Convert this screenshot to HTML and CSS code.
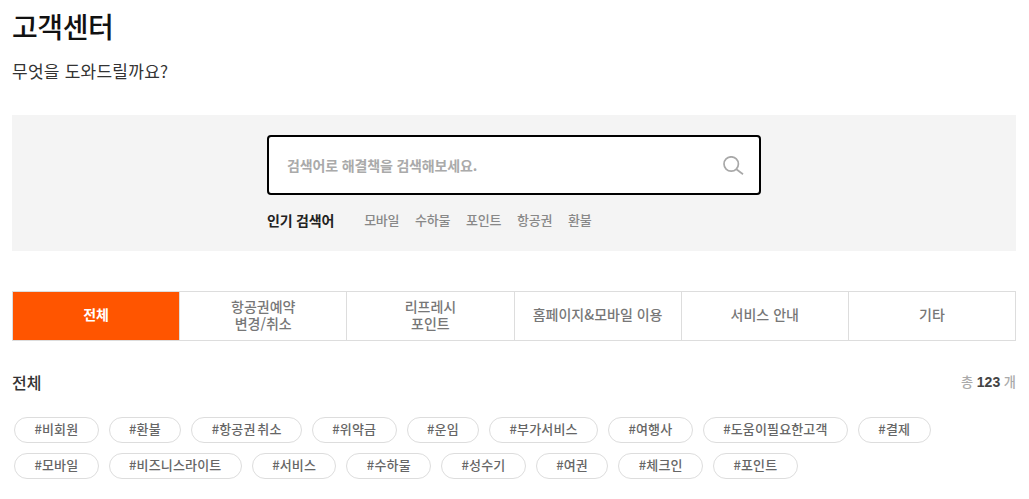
FILE: index.html
```html
<!DOCTYPE html>
<html lang="ko">
<head>
<meta charset="utf-8">
<title>고객센터</title>
<link rel="stylesheet" href="styles.css">
</head>
<body>
<main class="page">
  <h1 class="title">고객센터</h1>
  <p class="subtitle">무엇을 도와드릴까요?</p>
  <section class="search-panel">
    <div class="search-inner">
      <div class="search-box">
        <span class="placeholder">검색어로 해결책을 검색해보세요.</span>
        <svg class="search-icon" width="21" height="19" viewBox="0 0 21 19" fill="none" stroke="#a8a8a8" stroke-width="1.7"><circle cx="8.2" cy="8" r="7.2"/><path d="M13.4 13.2L20 18.2"/></svg>
      </div>
      <div class="popular">
        <strong class="popular-label">인기 검색어</strong>
        <span>모바일</span><span>수하물</span><span>포인트</span><span>항공권</span><span>환불</span>
      </div>
    </div>
  </section>
  <nav class="tabs">
    <a class="tab active">전체</a>
    <a class="tab">항공권예약<br>변경/취소</a>
    <a class="tab">리프레시<br>포인트</a>
    <a class="tab">홈페이지&amp;모바일 이용</a>
    <a class="tab">서비스 안내</a>
    <a class="tab">기타</a>
  </nav>
  <div class="result-head">
    <h2 class="result-title">전체</h2>
    <span class="count">총 <b>123</b> 개</span>
  </div>
  <div class="tags">
    <span class="tag">#비회원</span><span class="tag">#환불</span><span class="tag">#항공권 취소</span><span class="tag">#위약금</span><span class="tag">#운임</span><span class="tag">#부가서비스</span><span class="tag">#여행사</span><span class="tag">#도움이필요한고객</span><span class="tag">#결제</span>
    <span class="tag">#모바일</span><span class="tag">#비즈니스라이트</span><span class="tag">#서비스</span><span class="tag">#수하물</span><span class="tag">#성수기</span><span class="tag">#여권</span><span class="tag">#체크인</span><span class="tag">#포인트</span>
  </div>
</main>
</body>
</html>
```
FILE: styles.css
```css
* { box-sizing: border-box; }
html, body { margin: 0; padding: 0; background: #fff; }
body {
  font-family: "Noto Sans CJK KR", "Noto Sans", sans-serif;
  color: #222;
  overflow: hidden;
}
.page { padding: 0 13px 0 12px; }
.title {
  margin: 0;
  height: 46px;
  font-size: 28px;
  line-height: 28px;
  padding-top: 12px;
  font-weight: 500;
  color: #111;
  letter-spacing: -0.4px;
}
.subtitle {
  margin: 12px 0 0;
  font-size: 17px;
  line-height: 26px;
  color: #333;
  letter-spacing: 0.25px;
}
.search-panel {
  margin-top: 31px;
  height: 136px;
  background: #f4f4f4;
  padding-top: 20px;
  display: flex;
  justify-content: center;
}
.search-inner { width: 494px; }
.search-box {
  height: 60px;
  background: #fff;
  border: 2px solid #000;
  border-radius: 4px;
  display: flex;
  align-items: center;
  justify-content: space-between;
  padding: 0 15px 0 18px;
}
.placeholder { font-size: 14px; font-weight: 700; color: #aaa; letter-spacing: -0.15px; }
.search-icon { display: block; }
.popular {
  display: flex;
  align-items: center;
  gap: 16px;
  margin-top: 15px;
  font-size: 13px;
  line-height: 20px;
  color: #888;
  letter-spacing: -0.3px;
  font-weight: 500;
}
.popular-label { font-size: 14px; font-weight: 700; color: #222; margin-right: 14px; letter-spacing: -0.2px; }
.tabs {
  display: flex;
  margin-top: 40px;
  height: 50px;
  border: 1px solid #ddd;
  border-right: 0;
}
.tab {
  flex: 1 1 0;
  display: flex;
  align-items: center;
  justify-content: center;
  text-align: center;
  border-right: 1px solid #ddd;
  padding-bottom: 3px;
  font-size: 14px;
  line-height: 17px;
  font-weight: 500;
  color: #777;
}
.tab.active { background: #f50; color: #fff; font-weight: 700; }
.result-head {
  display: flex;
  justify-content: space-between;
  align-items: center;
  margin-top: 29px;
  height: 24px;
}
.result-title { margin: 0; font-size: 16px; font-weight: 500; color: #333; }
.count { font-size: 13.2px; color: #aaa; font-weight: 500; position: relative; top: -1px; }
.count b { color: #444; font-weight: 700; font-family: "Liberation Sans", sans-serif; font-size: 14px; }
.tags {
  display: flex;
  flex-wrap: wrap;
  gap: 10px;
  margin-top: 23px;
  padding-left: 2px;
}
.tag {
  height: 26px;
  padding: 0 19.4px;
  border: 1px solid #ddd;
  border-radius: 13px;
  font-size: 13px;
  line-height: 22px;
  color: #666;
  font-weight: 500;
  letter-spacing: 0.15px;
  word-spacing: -2px;
  white-space: nowrap;
}
```
